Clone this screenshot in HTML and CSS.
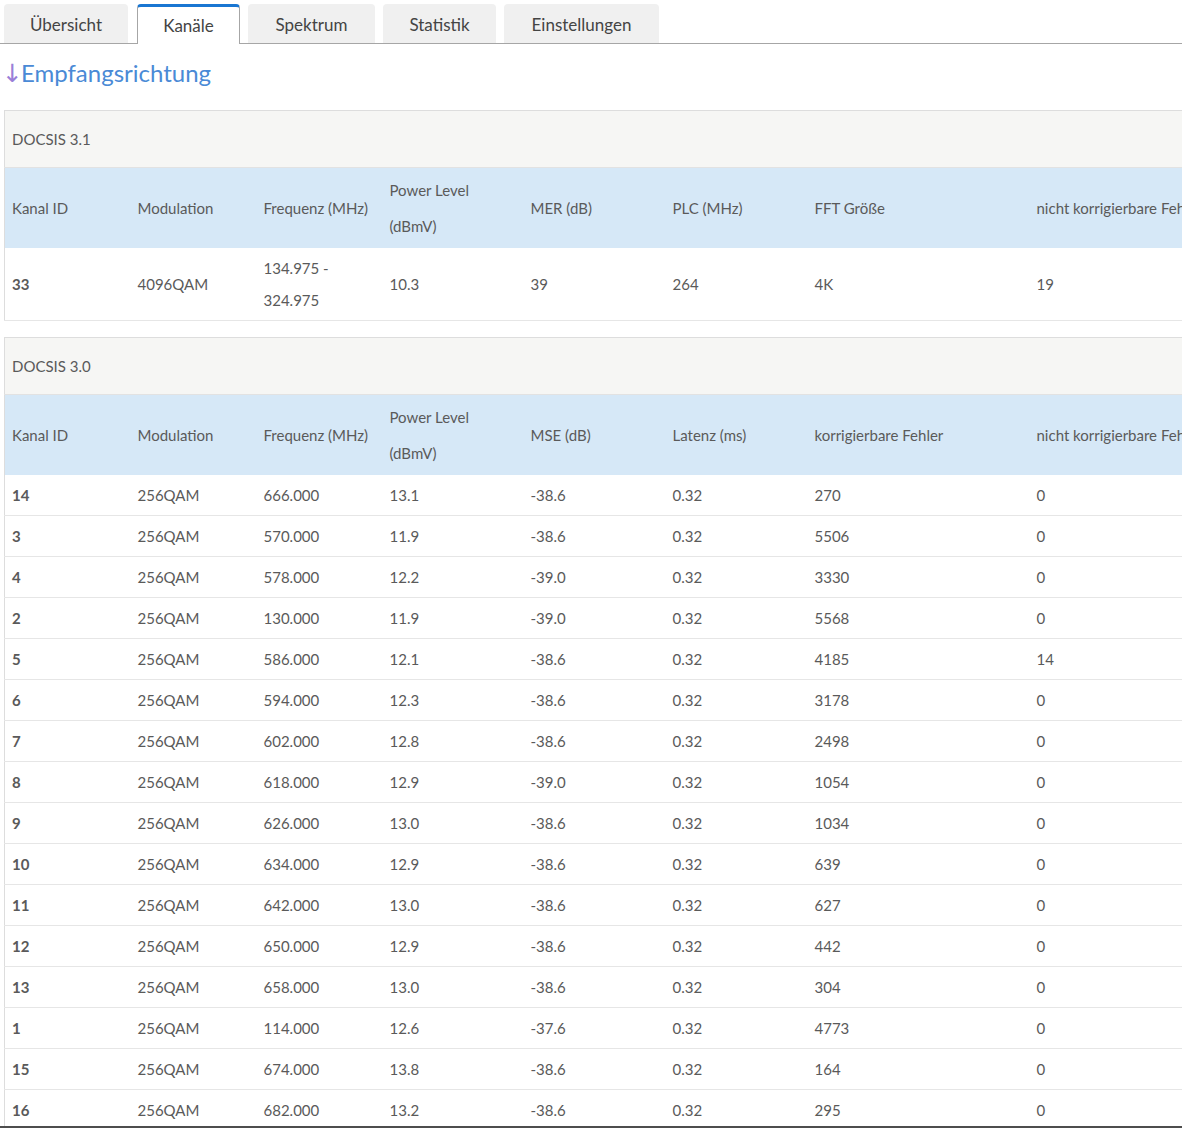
FILE: index.html
```html
<!DOCTYPE html>
<html lang="de">
<head>
<meta charset="utf-8">
<title>Kanäle</title>
<link rel="stylesheet" href="styles.css">
</head>
<body>
<div class="page">
  <nav class="tabs">
    <div class="tab t1">Übersicht</div>
    <div class="tab t2 active">Kanäle</div>
    <div class="tab t3">Spektrum</div>
    <div class="tab t4">Statistik</div>
    <div class="tab t5">Einstellungen</div>
  </nav>
  <h2 class="title"><span class="arrow">↓</span>Empfangsrichtung</h2>

  <table class="grid">
    <colgroup><col class="c1"><col class="c2"><col class="c3"><col class="c4"><col class="c5"><col class="c6"><col class="c7"><col class="c8"></colgroup>
    <tr class="cap"><td colspan="8">DOCSIS 3.1</td></tr>
    <tr class="head"><th>Kanal ID</th><th>Modulation</th><th>Frequenz (MHz)</th><th>Power Level<br>(dBmV)</th><th>MER (dB)</th><th>PLC (MHz)</th><th>FFT Größe</th><th>nicht korrigierbare Fehler</th></tr>
    <tr class="row"><td class="id">33</td><td>4096QAM</td><td>134.975 -<br>324.975</td><td>10.3</td><td>39</td><td>264</td><td>4K</td><td>19</td></tr>
  </table>

  <table class="grid">
    <colgroup><col class="c1"><col class="c2"><col class="c3"><col class="c4"><col class="c5"><col class="c6"><col class="c7"><col class="c8"></colgroup>
    <tr class="cap"><td colspan="8">DOCSIS 3.0</td></tr>
    <tr class="head"><th>Kanal ID</th><th>Modulation</th><th>Frequenz (MHz)</th><th>Power Level<br>(dBmV)</th><th>MSE (dB)</th><th>Latenz (ms)</th><th>korrigierbare Fehler</th><th>nicht korrigierbare Fehler</th></tr>
    <tr class="row"><td class="id">14</td><td>256QAM</td><td>666.000</td><td>13.1</td><td>-38.6</td><td>0.32</td><td>270</td><td>0</td></tr>
    <tr class="row"><td class="id">3</td><td>256QAM</td><td>570.000</td><td>11.9</td><td>-38.6</td><td>0.32</td><td>5506</td><td>0</td></tr>
    <tr class="row"><td class="id">4</td><td>256QAM</td><td>578.000</td><td>12.2</td><td>-39.0</td><td>0.32</td><td>3330</td><td>0</td></tr>
    <tr class="row"><td class="id">2</td><td>256QAM</td><td>130.000</td><td>11.9</td><td>-39.0</td><td>0.32</td><td>5568</td><td>0</td></tr>
    <tr class="row"><td class="id">5</td><td>256QAM</td><td>586.000</td><td>12.1</td><td>-38.6</td><td>0.32</td><td>4185</td><td>14</td></tr>
    <tr class="row"><td class="id">6</td><td>256QAM</td><td>594.000</td><td>12.3</td><td>-38.6</td><td>0.32</td><td>3178</td><td>0</td></tr>
    <tr class="row"><td class="id">7</td><td>256QAM</td><td>602.000</td><td>12.8</td><td>-38.6</td><td>0.32</td><td>2498</td><td>0</td></tr>
    <tr class="row"><td class="id">8</td><td>256QAM</td><td>618.000</td><td>12.9</td><td>-39.0</td><td>0.32</td><td>1054</td><td>0</td></tr>
    <tr class="row"><td class="id">9</td><td>256QAM</td><td>626.000</td><td>13.0</td><td>-38.6</td><td>0.32</td><td>1034</td><td>0</td></tr>
    <tr class="row"><td class="id">10</td><td>256QAM</td><td>634.000</td><td>12.9</td><td>-38.6</td><td>0.32</td><td>639</td><td>0</td></tr>
    <tr class="row"><td class="id">11</td><td>256QAM</td><td>642.000</td><td>13.0</td><td>-38.6</td><td>0.32</td><td>627</td><td>0</td></tr>
    <tr class="row"><td class="id">12</td><td>256QAM</td><td>650.000</td><td>12.9</td><td>-38.6</td><td>0.32</td><td>442</td><td>0</td></tr>
    <tr class="row"><td class="id">13</td><td>256QAM</td><td>658.000</td><td>13.0</td><td>-38.6</td><td>0.32</td><td>304</td><td>0</td></tr>
    <tr class="row"><td class="id">1</td><td>256QAM</td><td>114.000</td><td>12.6</td><td>-37.6</td><td>0.32</td><td>4773</td><td>0</td></tr>
    <tr class="row"><td class="id">15</td><td>256QAM</td><td>674.000</td><td>13.8</td><td>-38.6</td><td>0.32</td><td>164</td><td>0</td></tr>
    <tr class="row"><td class="id">16</td><td>256QAM</td><td>682.000</td><td>13.2</td><td>-38.6</td><td>0.32</td><td>295</td><td>0</td></tr>
  </table>
</div>
</body>
</html>
```
FILE: styles.css
```css
html, body {
  margin: 0;
  padding: 0;
  background: #fff;
}
body {
  font-family: Lato, "Open Sans", sans-serif;
  color: #5a5a5a;
}
.page {
  height: 1126px;
  overflow: hidden;
  border-bottom: 2px solid #4d4d4d;
}
.tabs {
  display: flex;
  gap: 8px;
  padding: 4px 0 0 4px;
  border-bottom: 1px solid #a6a6a6;
  height: 39px;
}
.tab {
  box-sizing: border-box;
  height: 39px;
  background: #f0f0f0;
  border-radius: 4px 4px 0 0;
  font-size: 17px;
  line-height: 41px;
  color: #444;
  text-align: center;
}
.t1 { width: 124px; margin-right: 1px; }
.t2 { width: 103px; }
.t3 { width: 127px; }
.t4 { width: 113px; }
.t5 { width: 155px; }
.tab.active {
  background: #fff;
  border: 1px solid #a6a6a6;
  border-top: 3px solid #1976d2;
  border-bottom: none;
  height: 40px;
  line-height: 37px;
  margin-bottom: -1px;
}
.title {
  margin: 0;
  padding: 14px 0 0 2px;
  height: 52px;
  font-size: 24px;
  font-weight: 400;
  color: #4a8ad6;
  line-height: 30px;
}
.arrow {
  display: inline-block;
  width: 19px;
  color: #9a7fd8;
  font-family: "DejaVu Sans", sans-serif;
  font-size: 25px;
}
.grid {
  margin: 0 0 16px 4px;
  border-collapse: collapse;
  table-layout: fixed;
  width: 1358px;
  border: 1px solid #dddddd;
  font-size: 15px;
}
.c1, .c2, .c3 { width: 126px; }
.c4 { width: 141px; }
.c5, .c6 { width: 142px; }
.c7 { width: 222px; }
.c8 { width: 333px; }
.grid td, .grid th {
  padding: 4px 8px 4px 7px;
  text-align: left;
  font-weight: 400;
  vertical-align: middle;
  white-space: nowrap;
}
.cap td {
  background: #f6f6f4;
  height: 48px;
  border-bottom: 1px solid #e2e2e2;
}
.head th {
  background: #d6e8f7;
  line-height: 36px;
  height: 72px;
}
.row td {
  line-height: 32px;
  border-bottom: 1px solid #e6e6e6;
}
.row td.id {
  font-weight: 700;
}
```
